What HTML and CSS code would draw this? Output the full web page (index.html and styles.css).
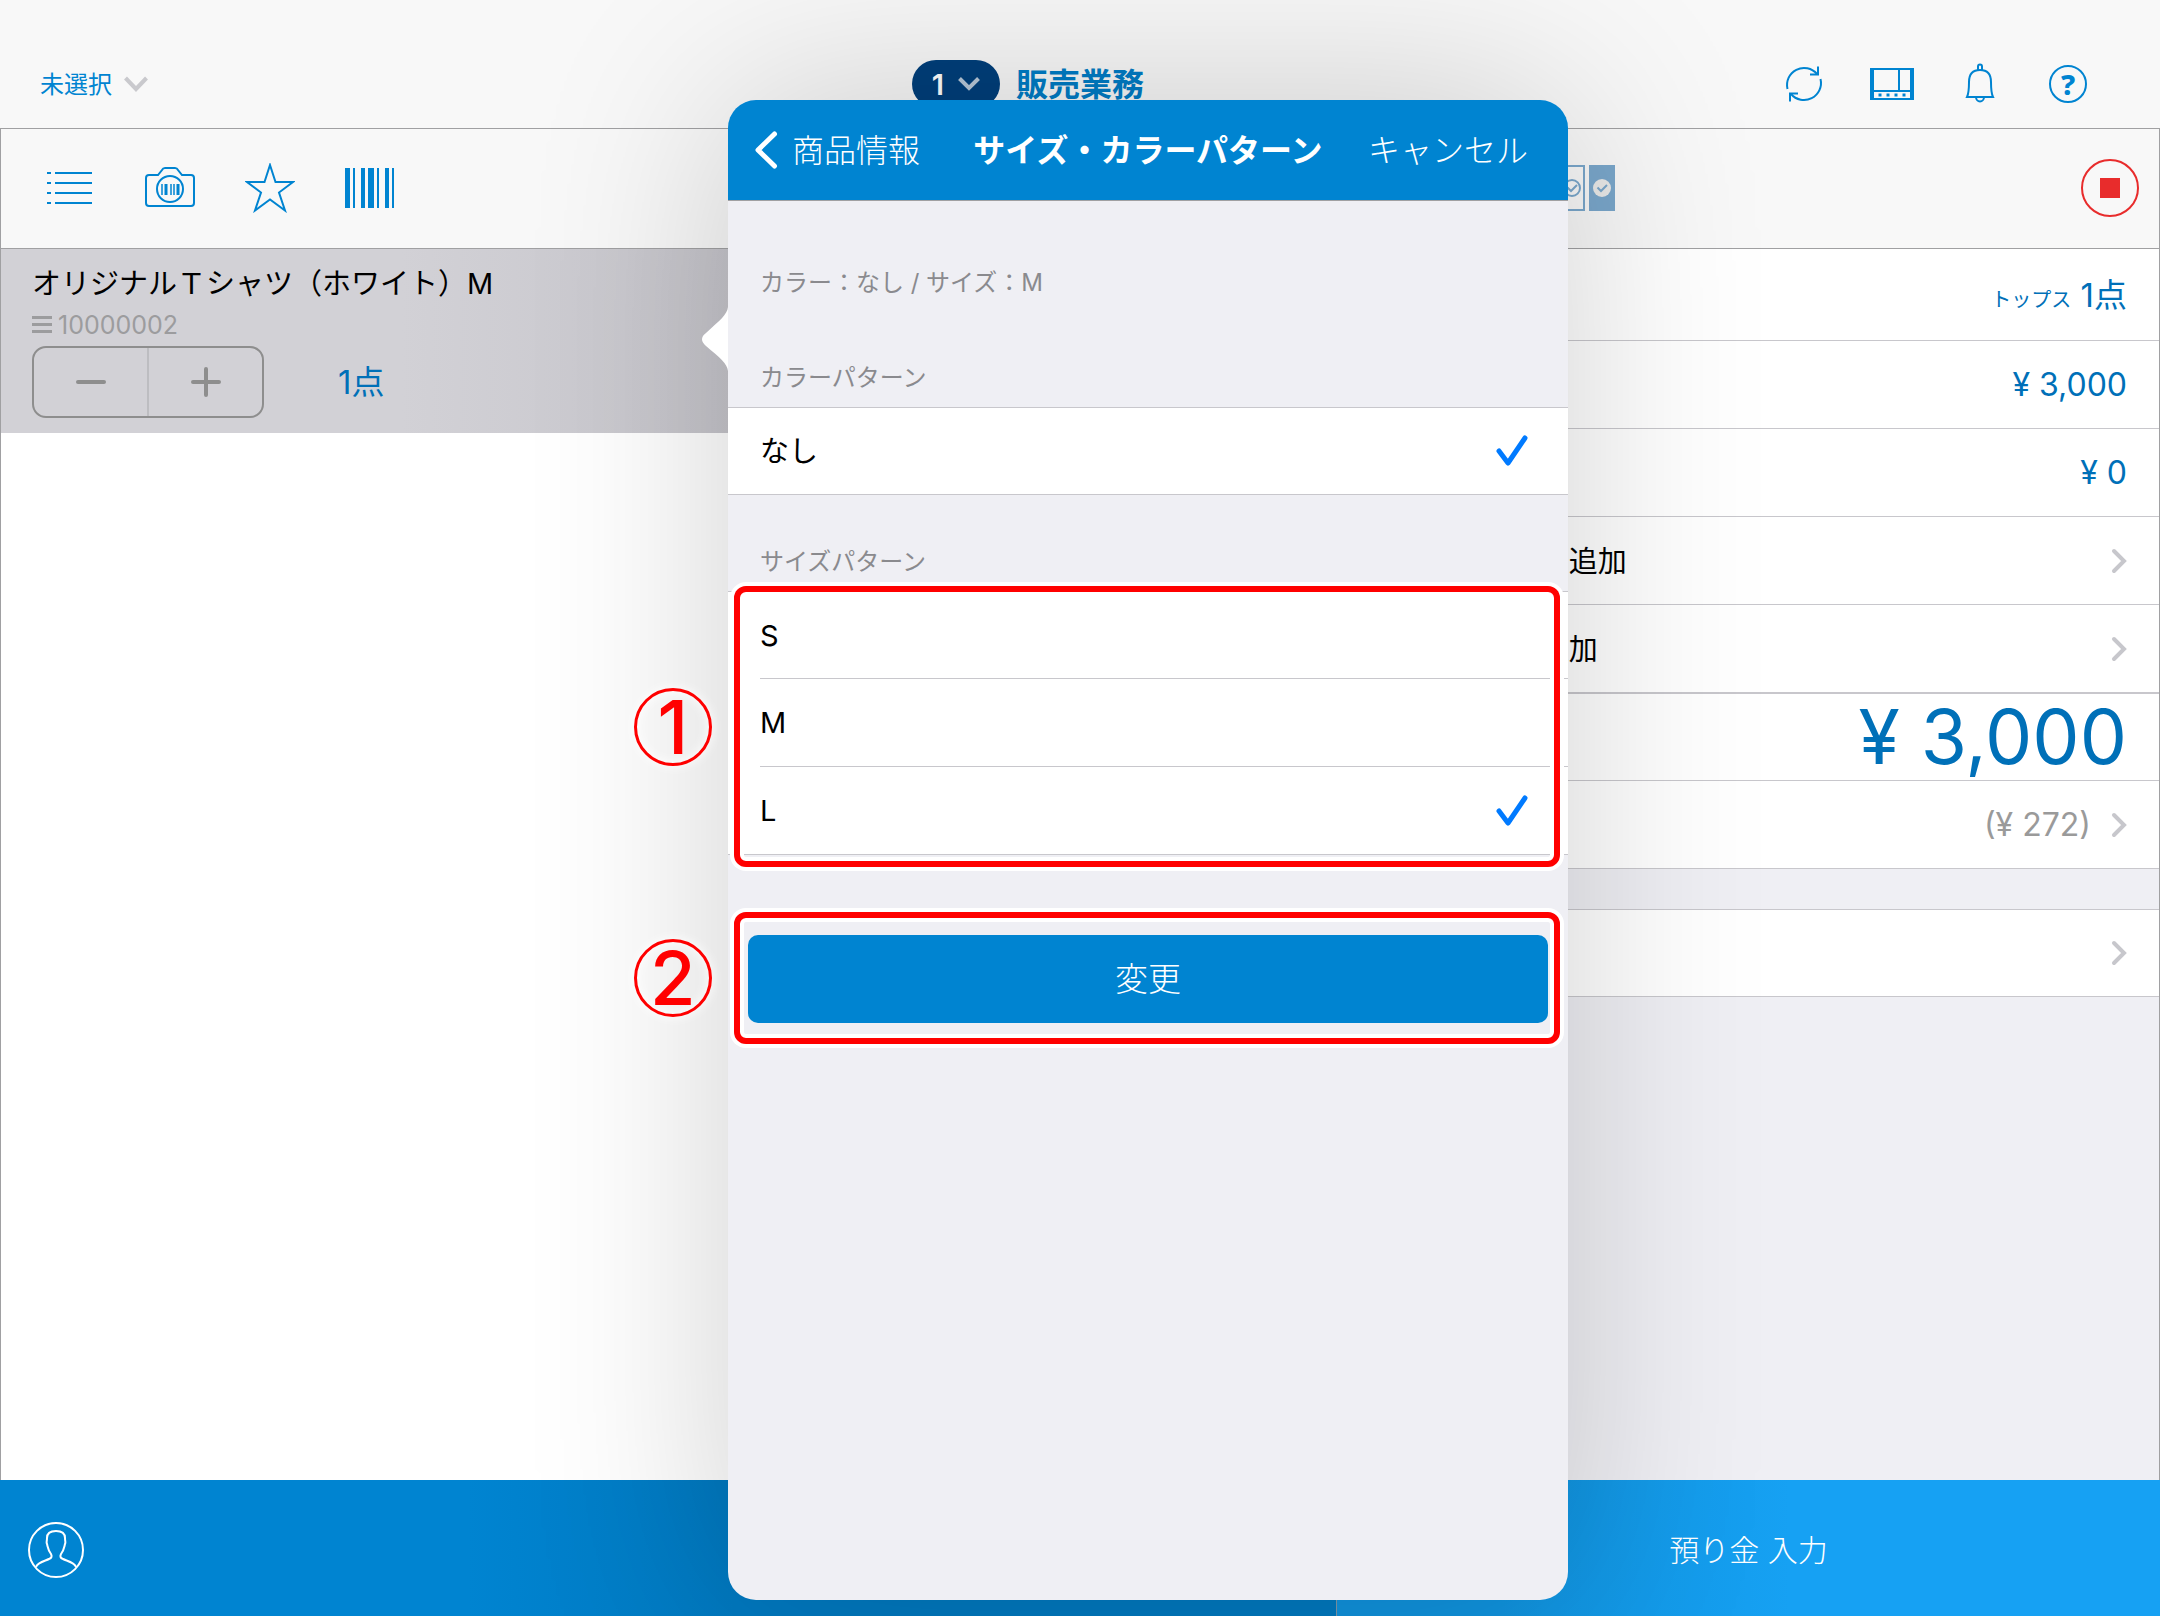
FILE: index.html
```html
<!DOCTYPE html>
<html lang="ja">
<head>
    <meta charset="UTF-8">
    <meta name="viewport" content="width=device-width, initial-scale=1.0">
    <title>販売業務</title>
    <link rel="stylesheet" href="styles.css">
</head>
<body>
    <div class="app">
        <header class="header">
            <div class="header-left">
                <button class="customer"><span class="text">未選択</span>
                    <svg width="24" height="16" viewBox="0 0 24 16" fill="none" stroke="#c9c9cd" stroke-width="4"><path d="M1.500 2L12 13 22.500 2"/></svg>
                </button>
                <button class="pill">1
                    <svg width="22" height="14" viewBox="0 0 22 14" fill="none" stroke="#b8c8d8" stroke-width="4"><path d="M1.500 1.500L11 11 20.500 1.500"/></svg>
                </button>
            </div>
            <h1 class="title text">販売業務</h1>
            <nav class="header-icons">
                <button class="icon-button" aria-label="更新">
                    <svg width="44" height="44" viewBox="0 0 44 44" fill="none" stroke="currentColor" stroke-width="2"><path d="M5.500 27A17 17 0 0 1 35 12M38.500 17A17 17 0 0 1 9 32"/><path d="M36 4.500V12.500H28M8 39.500V31.500H16"/></svg>
                </button>
                <button class="icon-button" aria-label="画面">
                    <svg width="44" height="44" viewBox="0 0 44 44" fill="none" stroke="currentColor" stroke-width="2"><path d="M0 7H44M0 37H44M2 29H42M29 7V29"/><path d="M2 6V38M42 6V38" stroke-width="4"/><path d="M8.500 33H11.500M16.500 33H19.500M24.500 33H27.500M32.500 33H35.500" stroke-width="3"/></svg>
                </button>
                <button class="icon-button" aria-label="お知らせ">
                    <svg width="44" height="44" viewBox="0 0 44 44" fill="none" stroke="currentColor" stroke-width="2"><path d="M9 35C11 31 11 28 11 20C11 12 15 8 22 8S33 12 33 20C33 28 33 31 35 35Z"/><path d="M20 8V4.500A2 2 0 0 1 24 4.500V8M18 35A4 4.500 0 0 0 26 35"/></svg>
                </button>
                <button class="icon-button help" aria-label="ヘルプ">?</button>
            </nav>
        </header>

        <div class="toolbar">
            <button class="icon-button" aria-label="商品一覧">
                <svg width="50" height="50" viewBox="0 0 50 50" fill="none" stroke="currentColor" stroke-width="2"><path d="M2 10H6M2 20H6M2 30H6M2 40H6M10 10H47M10 20H47M10 30H47M10 40H47"/></svg>
            </button>
            <button class="icon-button" aria-label="カメラ">
                <svg width="50" height="50" viewBox="0 0 50 50" fill="none" stroke="currentColor" stroke-width="2"><path d="M4 12H13L17 7Q18 5 20 5H30Q32 5 33 7L37 12H46Q49 12 49 15V40Q49 43 46 43H4Q1 43 1 40V15Q1 12 4 12Z"/><circle cx="25" cy="26" r="13"/><path d="M17 21V32M26 21V32M29 21V32" stroke-width="1.500"/><path d="M21 21V32M33 21V32" stroke-width="3"/></svg>
            </button>
            <button class="icon-button" aria-label="お気に入り">
                <svg width="50" height="50" viewBox="0 0 50 50" fill="none" stroke="currentColor" stroke-width="2"><path d="M25 2L30.500 19H48L34 29.500L40 47.500L25 36.500L10 47.500L16 29.500L2 19H19.500Z"/></svg>
            </button>
            <button class="icon-button" aria-label="バーコード">
                <svg width="50" height="50" viewBox="0 0 50 50" fill="currentColor"><path d="M0 5H5V45H0ZM8 5H10V45H8ZM16 5H20V45H16ZM23 5H29V45H23ZM32 5H34V45H32ZM40 5H44V45H40ZM47 5H49V45H47Z"/></svg>
            </button>
            <div class="toolbar-right">
                <button class="icon-button" aria-label="選択切替">
                    <svg width="56" height="46" viewBox="0 0 56 46" fill="none" stroke="#7aa7cb" stroke-width="2"><path d="M1 1H25V45H1Z"/><circle cx="13" cy="23" r="8"/><path d="M8.500 22.500L12 26L18 20"/><path d="M30 0H56V46H30Z" fill="#7aa7cb" stroke="none"/><circle cx="43" cy="23" r="9" fill="#e9e9e8" stroke="none"/><path d="M38.500 22.500L42 26L48 20"/></svg>
                </button>
                <button class="stop" aria-label="中止"><span class="stop-mark"></span></button>
            </div>
        </div>

        <main class="content">
            <section class="cart">
                <div class="item">
                    <p class="item-name">オリジナルＴシャツ（ホワイト）M</p>
                    <p class="item-code">
                        <svg width="20" height="20" viewBox="0 0 20 20" stroke="currentColor" stroke-width="3"><path d="M0 2.500H20M0 9.500H20M0 16.500H20"/></svg>10000002
                    </p>
                    <div class="item-quantity">
                        <div class="stepper">
                            <button class="stepper-button" aria-label="減らす">
                                <svg width="32" height="32" viewBox="0 0 32 32" stroke="#8e8e8e" stroke-width="4" stroke-linecap="round"><path d="M3 16H29"/></svg>
                            </button>
                            <button class="stepper-button" aria-label="増やす">
                                <svg width="32" height="32" viewBox="0 0 32 32" stroke="#8e8e8e" stroke-width="4" stroke-linecap="round"><path d="M3 16H29M16 3V29"/></svg>
                            </button>
                        </div>
                        <span class="quantity text">1点</span>
                    </div>
                </div>
            </section>

            <section class="summary">
                <div class="row row-count"><span>点数</span><span class="quantity text"><small class="category">トップス</small> 1点</span></div>
                <div class="row"><span>小計</span><span class="value">¥ 3,000</span></div>
                <div class="row"><span>割引</span><span class="value">¥ 0</span></div>
                <button class="row"><span class="text">値引き・割引の追加</span><svg class="chevron" width="16" height="26" viewBox="0 0 16 26"><path d="M3 3L13 13L3 23"/></svg></button>
                <button class="row"><span class="text">まとめ値引き追加</span><svg class="chevron" width="16" height="26" viewBox="0 0 16 26"><path d="M3 3L13 13L3 23"/></svg></button>
                <div class="row row-total"><span>合計</span><span class="value">¥ 3,000</span></div>
                <button class="row"><span>内税</span><span class="tax">(¥ 272)</span><svg class="chevron" width="16" height="26" viewBox="0 0 16 26"><path d="M3 3L13 13L3 23"/></svg></button>
                <button class="row row-memo"><span>取引メモ入力</span><svg class="chevron" width="16" height="26" viewBox="0 0 16 26"><path d="M3 3L13 13L3 23"/></svg></button>
            </section>
        </main>

        <footer class="footer">
            <div class="footer-left">
                <button class="icon-button user" aria-label="担当者">
                    <svg width="56" height="56" viewBox="0 0 56 56" fill="none" stroke="currentColor" stroke-width="2"><circle cx="28" cy="28" r="27"/><path d="M8 45C10 40 17 39 21 37C24 36 24 34 23 32C20 28 20 26 19 22C18 20 19 20 19 16C19 11 23 9 28 9S37 11 37 16C37 20 38 20 37 22C36 26 36 28 33 32C32 34 32 36 35 37C39 39 46 40 48 45"/></svg>
                </button>
            </div>
            <button class="deposit">預り金 入力</button>
        </footer>

        <div class="popover" role="dialog" aria-labelledby="popover-title">
            <svg class="popover-arrow" width="26" height="64" viewBox="0 0 26 64"><path d="M26 0C25 8 18 13 4 26Q-4 32 4 39C18 51 25 56 26 64Z" fill="#fff"/></svg>
            <div class="popover-header">
                <button class="popover-back">
                    <svg width="24" height="40" viewBox="0 0 24 40" fill="none" stroke="currentColor" stroke-width="5" stroke-linecap="round" stroke-linejoin="round"><path d="M20.500 4L4 20L20.500 36"/></svg><span class="text">商品情報</span>
                </button>
                <h2 class="popover-title text" id="popover-title">サイズ・カラーパターン</h2>
                <button class="popover-cancel text">キャンセル</button>
            </div>

            <form class="popover-body">
                <p class="current">カラー：なし / サイズ：M</p>

                <h3 class="group-title">カラーパターン</h3>
                <div class="group">
                    <label class="option"><span class="text">なし</span><input class="option-input" type="radio" name="color" checked><svg class="check" width="32" height="32" viewBox="0 0 32 32"><path d="M3 16L12 28L29 3"/></svg></label>
                </div>

                <h3 class="group-title group-title-size">サイズパターン</h3>
                <div class="group">
                    <label class="option"><span>S</span><input class="option-input" type="radio" name="size"><svg class="check" width="32" height="32" viewBox="0 0 32 32"><path d="M3 16L12 28L29 3"/></svg></label>
                    <label class="option"><span>M</span><input class="option-input" type="radio" name="size"><svg class="check" width="32" height="32" viewBox="0 0 32 32"><path d="M3 16L12 28L29 3"/></svg></label>
                    <label class="option"><span>L</span><input class="option-input" type="radio" name="size" checked><svg class="check" width="32" height="32" viewBox="0 0 32 32"><path d="M3 16L12 28L29 3"/></svg></label>
                    <div class="frame frame-sizes"><span class="number">1</span></div>
                </div>

                <div class="submit-area">
                    <button class="submit" type="button"><span class="text">変更</span></button>
                    <div class="frame frame-submit"><span class="number">2</span></div>
                </div>
            </form>
        </div>
    </div>
</body>
</html>
```
FILE: styles.css
```css
* {
    box-sizing: border-box;
}

body {
    margin: 0;
    font-family: Inter, "Noto Sans CJK JP", sans-serif;
    font-size: 29px;
    color: #000;
    background-color: #fff;
}

h1, h2, h3, p {
    margin: 0;
    font-weight: normal;
}

button {
    margin: 0;
    padding: 0;
    border: none;
    background: none;
    font: inherit;
    color: inherit;
    cursor: pointer;
}

svg {
    display: block;
    flex-shrink: 0;
}

/* Japanese glyphs sit low in the line box */
.text {
    display: inline-block;
    padding-bottom: 4px;
}

.app {
    position: relative;
    display: flex;
    flex-direction: column;
    min-height: 100vh;
    overflow: hidden;
}

.icon-button {
    color: #0084d1;
}

/* header */
.header {
    display: grid;
    grid-template-columns: 1fr auto 1fr;
    align-items: center;
    column-gap: 16px;
    height: 129px;
    padding: 40px 0 0;
    border-bottom: 1px solid #a0a0a2;
    background-color: #f8f8f8;
}

.header-left {
    display: flex;
    align-items: center;
    justify-content: space-between;
    padding-left: 40px;
}

.customer {
    display: flex;
    align-items: center;
    gap: 12px;
    font-size: 24px;
    color: #0084d1;
}

.pill {
    display: flex;
    align-items: center;
    justify-content: center;
    gap: 14px;
    width: 88px;
    height: 48px;
    border-radius: 24px;
    background-color: #003f7b;
    font-weight: 600;
    color: #fff;
}

.title {
    font-size: 32px;
    font-weight: 700;
    color: #007cc5;
}

.header-icons {
    display: flex;
    justify-content: flex-end;
    gap: 44px;
    padding-right: 70px;
}

.help {
    width: 38px;
    height: 38px;
    margin: 3px;
    border: 2px solid #0084d1;
    border-radius: 50%;
    font-family: "Noto Sans", sans-serif;
    font-size: 29px;
    font-weight: 800;
    line-height: 32px;
}

/* toolbar */
.toolbar {
    display: flex;
    align-items: center;
    gap: 50px;
    height: 120px;
    padding: 0 20px 2px 44px;
    border: 1px solid #a0a0a2;
    border-top: none;
    background-color: #f8f8f8;
}

.toolbar-right {
    display: flex;
    align-items: center;
    justify-content: space-between;
    width: 580px;
    margin-left: auto;
}

.stop {
    display: flex;
    align-items: center;
    justify-content: center;
    width: 58px;
    height: 58px;
    border: 2px solid #e82c2c;
    border-radius: 50%;
}

.stop-mark {
    width: 20px;
    height: 20px;
    background-color: #e82c2c;
}

/* content */
.content {
    display: grid;
    grid-template-columns: 1fr 38.1%;
    flex: 1;
    border: 1px solid #a0a0a2;
    border-width: 0 1px;
}

.item {
    padding: 15px 31px;
    background: linear-gradient(to right, #d2d1d6 30%, #c6c5cb 55%);
}

.item-name {
    margin-bottom: 5px;
    line-height: 40px;
}

.item-code {
    display: flex;
    align-items: center;
    gap: 6px;
    margin-bottom: 5px;
    font-size: 25px;
    line-height: 32px;
    color: #9c9c9e;
}

.item-quantity {
    display: flex;
    align-items: center;
    gap: 74px;
}

.stepper {
    display: flex;
    width: 232px;
    height: 72px;
    border: 2px solid #8e8e8e;
    border-radius: 14px;
}

.stepper-button {
    display: flex;
    flex: 1;
    align-items: center;
    justify-content: center;
}

.stepper-button + .stepper-button {
    border-left: 2px solid #bdbdc1;
}

.quantity {
    font-size: 33px;
    color: #0070b8;
}

/* summary */
.summary {
    background-color: #efeff4;
}

.row {
    display: flex;
    align-items: center;
    justify-content: space-between;
    width: 100%;
    height: 88px;
    padding: 0 32px 0 29px;
    border-bottom: 1px solid #c8c7cc;
    background-color: #fff;
}

.row-count {
    height: 92px;
}

.row-total {
    border-top: 1px solid #c8c7cc;
}

.row-memo {
    margin-top: 40px;
    border-top: 1px solid #c8c7cc;
}

.value {
    font-size: 32px;
    color: #0070b8;
}

.row-total .value {
    font-size: 75px;
    line-height: 84px;
}

.category {
    font-size: 20px;
}

.tax {
    margin-left: auto;
    padding-right: 20px;
    font-size: 32px;
    color: #9a9a9a;
}

.chevron {
    fill: none;
    stroke: #c7c7cc;
    stroke-width: 4;
    stroke-linecap: round;
}

/* footer */
.footer {
    display: grid;
    grid-template-columns: 1fr 38.1%;
    height: 136px;
    color: #fff;
}

.footer-left {
    display: flex;
    align-items: center;
    padding: 4px 0 0 28px;
    border-right: 1px solid #7f99ab;
    background: linear-gradient(to right, #0084d1 35%, #0079c0 55%);
}

.user {
    color: #fff;
}

.deposit {
    background: linear-gradient(to right, #1093de 20%, #16a1f3 55%);
    font-size: 30px;
    font-weight: 300;
}

/* popover */
.popover {
    position: absolute;
    top: 100px;
    bottom: 16px;
    left: 33.7%;
    width: 840px;
    border-radius: 28px;
    background-color: #efeff4;
    box-shadow: 0 0 200px rgba(0, 0, 0, 0.19);
}

.popover-arrow {
    position: absolute;
    top: 207px;
    left: -26px;
}

.popover-header {
    display: grid;
    grid-template-columns: 1fr auto 1fr;
    align-items: center;
    height: 101px;
    padding: 0 26px;
    border-bottom: 1px solid #a0a0a2;
    border-radius: 28px 28px 0 0;
    background-color: #0084d1;
    font-size: 32px;
    color: #fff;
}

.popover-back {
    display: flex;
    align-items: center;
    gap: 14px;
    font-weight: 300;
}

.popover-title {
    font-size: 32px;
    font-weight: 700;
}

.popover-cancel {
    justify-self: end;
    padding-right: 14px;
    font-weight: 300;
}

.popover-body {
    padding-top: 66px;
}

.current, .group-title {
    padding: 0 32px;
    font-size: 24px;
    line-height: 32px;
    color: #8a8a8e;
}

.group-title {
    padding-top: 63px;
    padding-bottom: 13px;
}

.group-title-size {
    padding-top: 51px;
}

.group {
    position: relative;
    border-top: 1px solid #c8c7cc;
    border-bottom: 1px solid #c8c7cc;
    background-color: #fff;
}

.option {
    display: flex;
    align-items: center;
    height: 86px;
    margin-left: 32px;
    padding-right: 40px;
}

.option + .option {
    height: 88px;
    border-top: 1px solid #c8c7cc;
}

.option-input {
    appearance: none;
    margin: 0 0 0 auto;
}

.check {
    visibility: hidden;
    fill: none;
    stroke: #007aff;
    stroke-width: 5;
    stroke-linecap: round;
    stroke-linejoin: round;
}

.option-input:checked + .check {
    visibility: visible;
}

.submit-area {
    position: relative;
    padding: 80px 20px 0;
}

.submit {
    display: block;
    width: 100%;
    height: 88px;
    border-radius: 10px;
    background-color: #0084d1;
    font-size: 33px;
    font-weight: 300;
    color: #fff;
}

/* numbered frames over the controls */
.frame {
    position: absolute;
    left: 6px;
    right: 8px;
    border: 6px solid #f00;
    border-radius: 12px;
    box-shadow: 0 0 0 4px #fff, inset 0 0 0 4px #fff;
    pointer-events: none;
}

.frame-sizes {
    top: -6px;
    bottom: -13px;
}

.frame-submit {
    top: 57px;
    bottom: -21px;
}

.number {
    position: absolute;
    top: 50%;
    left: -106px;
    width: 78px;
    height: 78px;
    margin-top: -39px;
    border: 3px solid #f00;
    border-radius: 50%;
    box-shadow: 0 0 12px #fff, inset 0 0 12px #fff;
    font-size: 74px;
    font-weight: 500;
    line-height: 72px;
    text-align: center;
    color: #f00;
}
```
